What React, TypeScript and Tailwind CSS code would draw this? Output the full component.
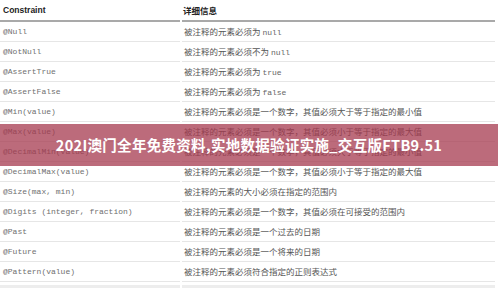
import React from 'react';

type Row = { name: string; desc: React.ReactNode };

const mono = { fontFamily: '"Liberation Mono", "DejaVu Sans Mono", monospace' };

const code = (t: string) => (
  <span className="text-[8px] text-[#666]" style={mono}>{t}</span>
);

const rows: Row[] = [
  { name: '@Null', desc: <>被注释的元素必须为 {code('null')}</> },
  { name: '@NotNull', desc: <>被注释的元素必须不为 {code('null')}</> },
  { name: '@AssertTrue', desc: <>被注释的元素必须为 {code('true')}</> },
  { name: '@AssertFalse', desc: <>被注释的元素必须为 {code('false')}</> },
  { name: '@Min(value)', desc: '被注释的元素必须是一个数字，其值必须大于等于指定的最小值' },
  { name: '@Max(value)', desc: '被注释的元素必须是一个数字，其值必须小于等于指定的最大值' },
  { name: '@DecimalMin(value)', desc: '被注释的元素必须是一个数字，其值必须大于等于指定的最小值' },
  { name: '@DecimalMax(value)', desc: '被注释的元素必须是一个数字，其值必须小于等于指定的最大值' },
  { name: '@Size(max, min)', desc: '被注释的元素的大小必须在指定的范围内' },
  { name: '@Digits (integer, fraction)', desc: '被注释的元素必须是一个数字，其值必须在可接受的范围内' },
  { name: '@Past', desc: '被注释的元素必须是一个过去的日期' },
  { name: '@Future', desc: '被注释的元素必须是一个将来的日期' },
  { name: '@Pattern(value)', desc: '被注释的元素必须符合指定的正则表达式' },
];

export default function App() {
  return (
    <div className="relative w-[498px] h-[291px] overflow-hidden bg-white">
      <div className="w-[495px]">
        <div className="grid grid-cols-[180px_1fr] gap-x-[2px]">
          <div className="h-[22px] border-b-2 border-[#a9a9a9] pl-[3px] flex items-center text-[8.5px] font-bold text-[#222] font-['Liberation_Sans',sans-serif]">
            Constraint
          </div>
          <div className="h-[22px] border-b-2 border-[#a9a9a9] pl-[1px] flex items-center text-[8.5px] font-bold text-[#222] font-['Noto_Sans_CJK_SC',sans-serif]">
            详细信息
          </div>
          {rows.map((r) => (
            <React.Fragment key={r.name}>
              <div className="h-[20px] border-b border-[#e6e6e6] pl-[3px] flex items-center text-[8px] text-[#6f6f6f] whitespace-pre" style={mono}>
                {r.name}
              </div>
              <div className="h-[20px] border-b border-[#e6e6e6] pl-[2px] flex items-center text-[8.5px] text-[#555] whitespace-nowrap font-['Noto_Sans_CJK_SC',sans-serif]">
                <span>{r.desc}</span>
              </div>
            </React.Fragment>
          ))}
          <div className="h-[20px] border-t-[3px] border-[#ededed] mt-[3px]" />
          <div className="h-[20px] border-t-[3px] border-[#ededed] mt-[3px]" />
        </div>
      </div>

      <div className="absolute left-0 right-0 top-[124px] h-[42px] bg-[#a53a4f]/75 flex items-center justify-center">
        <span className="text-white font-bold text-[14.5px] tracking-[0.3px] font-['Noto_Sans_CJK_SC',sans-serif]">
          202I澳门全年免费资料,实地数据验证实施_交互版FTB9.51
        </span>
      </div>
    </div>
  );
}
